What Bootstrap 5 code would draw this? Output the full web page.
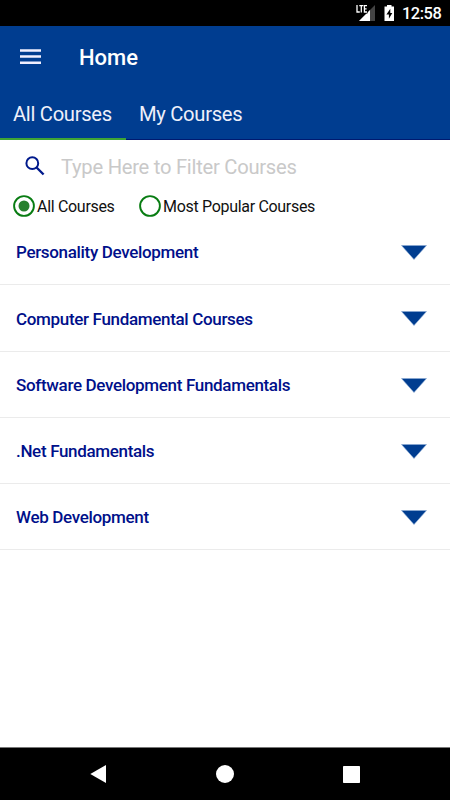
<!DOCTYPE html>
<html lang="en">
<head>
<meta charset="utf-8">
<meta name="viewport" content="width=device-width, initial-scale=1">
<title>Home</title>
<link href="https://cdn.jsdelivr.net/npm/bootstrap@5.3.0/dist/css/bootstrap.min.css" rel="stylesheet">
<style>
  body { font-family: Roboto, sans-serif; line-height: 1.2; }
  svg { display: block; flex: none; }
  .statusbar { height: 26px; background: #000; padding-right: 9px; }
  .clock { font-size: 16.4px; font-weight: 500; letter-spacing: -.45px; line-height: 26px; padding-top: 2px; width: 39px; margin-left: 7px; }
  .app-header { background: #003d90; height: 114px; }
  .titlebar { height: 62px; padding-left: 20px; }
  .title { font-size: 22px; font-weight: 500; margin-left: 38px; padding-top: 3px; }
  .tabs { height: 52px; border-bottom: 1px solid #001a70; }
  .tab { font-size: 20.2px; letter-spacing: -.3px; color: #eef0fa; height: 52px; line-height: 53px; padding: 0 13px; border: 0; background: none; }
  .tab.active { border-bottom: 2px solid #3fa535; width: 126px; }
  .filter { height: 50px; padding: 2px 0 0 25px; }
  .filter-input { font-size: 20.2px; letter-spacing: -.26px; color: #000; margin-left: 16px; border: 0; outline: 0; padding: 2px 0 0; width: 300px; background: none; }
  .filter-input::placeholder { color: #c9c9c9; opacity: 1; }
  .options { height: 29px; padding: 3px 0 0 13px; }
  .option { font-size: 16px; letter-spacing: -.31px; color: #111; gap: 2px; }
  .option span { padding-top: 1px; }
  .option-first { width: 126px; }
  .course { height: 66.25px; border-bottom: 1px solid #ebebeb; padding: 2px 23px 0 16px; }
  .course-name { font-size: 17px; letter-spacing: -.33px; font-weight: 500; color: #00108a; }
  .navkeys { height: 53px; background: #000; border-top: 1px solid #777; padding: 0 90px; }
</style>
</head>
<body class="bg-white vh-100 d-flex flex-column overflow-hidden">
  <div class="statusbar d-flex justify-content-end align-items-center text-white flex-shrink-0">
    <svg width="20" height="18" viewBox="0 0 20 18">
      <path d="M19 1V17H3Z" fill="#444"/><path d="M14 6V17H3Z" fill="#fff"/>
      <path d="M0 0H11.5V9.5H0Z" fill="#000"/>
      <path d="M1 1V8H3.8M3.3 1.6H7.3M5.3 1.6V8.5M11 1.6H8.4V8H11M8.4 4.8H10.6" fill="none" stroke="#fff" stroke-width="1.3"/>
    </svg>
    <svg class="ms-2" width="11" height="18" viewBox="0 0 11 18">
      <path d="M3 1H7.5V2.5H10V17H.5V2.5H3Z" fill="#fff"/><path d="M6.3 4.8L2.4 10.5H4.9V14.8L8.3 9H6.3Z" fill="#000"/>
    </svg>
    <span class="clock">12:58</span>
  </div>
  <header class="app-header flex-shrink-0">
    <div class="titlebar d-flex align-items-center text-white">
      <svg width="21" height="16" viewBox="0 0 21 16"><path d="M0 1.5H21M0 7.5H21M0 13.8H21" stroke="#f0efff" stroke-width="2.4"/></svg>
      <span class="title">Home</span>
    </div>
    <nav class="tabs d-flex">
      <button class="tab active text-start text-nowrap">All Courses</button>
      <button class="tab text-nowrap">My Courses</button>
    </nav>
  </header>
  <main class="flex-grow-1">
    <div class="filter d-flex align-items-center">
      <svg width="20" height="20" viewBox="0 0 20 20"><circle cx="7.3" cy="7.2" r="5.9" fill="none" stroke="#001a8c" stroke-width="2"/><path d="M11.6 11.5L18.6 18.5" stroke="#001a8c" stroke-width="2.4"/></svg>
      <input class="filter-input" type="text" placeholder="Type Here to Filter Courses">
    </div>
    <div class="options d-flex align-items-center">
      <div class="option option-first d-flex align-items-center text-nowrap">
        <svg width="22" height="22" viewBox="0 0 22 22"><circle cx="11" cy="11" r="9.9" fill="none" stroke="#087c12" stroke-width="1.9"/><circle cx="11" cy="11" r="5.5" fill="#27802d"/></svg>
        <span>All Courses</span>
      </div>
      <div class="option d-flex align-items-center text-nowrap">
        <svg width="22" height="22" viewBox="0 0 22 22"><circle cx="11" cy="11" r="9.9" fill="none" stroke="#087c12" stroke-width="1.9"/></svg>
        <span>Most Popular Courses</span>
      </div>
    </div>
    <div class="course-list">
      <div class="course d-flex align-items-center justify-content-between"><span class="course-name">Personality Development</span><svg width="26" height="15" viewBox="0 0 26 15"><path d="M.5 .5H25.5L13 14.5Z" fill="#003d90" stroke="#8cabd5" stroke-width=".6"/></svg></div>
      <div class="course d-flex align-items-center justify-content-between"><span class="course-name">Computer Fundamental Courses</span><svg width="26" height="15" viewBox="0 0 26 15"><path d="M.5 .5H25.5L13 14.5Z" fill="#003d90" stroke="#8cabd5" stroke-width=".6"/></svg></div>
      <div class="course d-flex align-items-center justify-content-between"><span class="course-name">Software Development Fundamentals</span><svg width="26" height="15" viewBox="0 0 26 15"><path d="M.5 .5H25.5L13 14.5Z" fill="#003d90" stroke="#8cabd5" stroke-width=".6"/></svg></div>
      <div class="course d-flex align-items-center justify-content-between"><span class="course-name">.Net Fundamentals</span><svg width="26" height="15" viewBox="0 0 26 15"><path d="M.5 .5H25.5L13 14.5Z" fill="#003d90" stroke="#8cabd5" stroke-width=".6"/></svg></div>
      <div class="course d-flex align-items-center justify-content-between"><span class="course-name">Web Development</span><svg width="26" height="15" viewBox="0 0 26 15"><path d="M.5 .5H25.5L13 14.5Z" fill="#003d90" stroke="#8cabd5" stroke-width=".6"/></svg></div>
    </div>
  </main>
  <footer class="navkeys d-flex align-items-center justify-content-between flex-shrink-0">
    <svg width="16" height="18" viewBox="0 0 16 18"><path d="M.3 9L16 0V18Z" fill="#fff"/></svg>
    <svg width="18" height="18" viewBox="0 0 18 18"><circle cx="9" cy="9" r="9" fill="#fff"/></svg>
    <svg width="17" height="17" viewBox="0 0 17 17"><rect width="17" height="17" rx=".7" fill="#fff"/></svg>
  </footer>
</body>
</html>
